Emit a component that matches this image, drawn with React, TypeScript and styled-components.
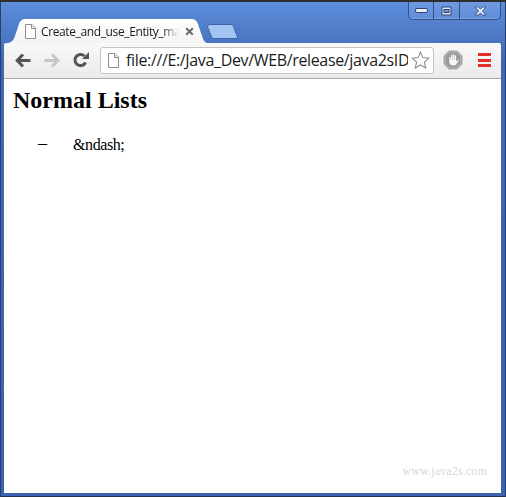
import React from 'react';
import styled, { createGlobalStyle } from 'styled-components';

const GlobalStyle = createGlobalStyle`
    html, body {
        margin: 0;
        padding: 0;
        background: #ffffff;
    }
`;

const Win = styled.div`
    width: 506px;
    height: 497px;
    box-sizing: border-box;
    display: flex;
    flex-direction: column;
    padding: 2px 5px 4px 4px;
    background: linear-gradient(180deg, #5e8fdc 0px, #4f7cc9 30px, #3f68b4 60px, #3c64b0 100%);
    box-shadow: inset 0 2px 0 #2e2e2e, inset 1px 0 0 #2b3f66, inset -1px 0 0 #2b3f66, inset 0 -1px 0 #24324f;
`;

const CaptionRow = styled.div`
    height: 17px;
    display: flex;
    justify-content: flex-end;
`;

const Controls = styled.div`
    display: flex;
    height: 18px;
    border: 1px solid #2f4f86;
    border-top: 0;
    border-radius: 0 0 5px 5px;
    box-sizing: border-box;
    box-shadow: inset 0 -1px 0 #7ea4e2;
    background: linear-gradient(180deg, #6f9ae0, #5f8cd8);
`;

const ControlBtn = styled.div<{ $w: number; $last?: boolean }>`
    width: ${(p) => p.$w}px;
    display: flex;
    align-items: center;
    justify-content: center;
    box-sizing: border-box;
    border-right: ${(p) => (p.$last ? '0' : '1px solid #2f4f86')};
`;

const TabRow = styled.div`
    height: 24px;
    display: flex;
    align-items: flex-start;
    padding-left: 4px;
`;

const Tab = styled.div`
    width: 199px;
    height: 24px;
    box-sizing: border-box;
    display: flex;
    align-items: center;
    padding: 0 13px 0 16px;
    background: linear-gradient(180deg, #ffffff, #f3f3f3);
    clip-path: path('M0 24 C5 23 6 20 8 14 L11 5 C12 2 14 0 18 0 L183 0 C187 0 189 2 190 5 L193 14 C195 20 196 23 199 24 Z');
`;

const TabTitle = styled.span`
    flex: 1;
    margin: 0 6px 0 5px;
    font: 12px "Open Sans", sans-serif;
    letter-spacing: -0.38px;
    color: #1a1a1a;
    white-space: nowrap;
    overflow: hidden;
    -webkit-mask-image: linear-gradient(90deg, #000 88%, transparent 100%);
`;

const NewTab = styled.div`
    display: flex;
    margin-top: 5px;
`;

const Toolbar = styled.div`
    height: 36px;
    box-sizing: border-box;
    display: flex;
    align-items: center;
    padding: 0 0 1px 11px;
    background: linear-gradient(180deg, #f8f8f8, #ebebeb);
    border-radius: 2px 2px 0 0;
    border-bottom: 1px solid #a8a8a8;
`;

const NavGroup = styled.div`
    display: flex;
    align-items: center;
    gap: 13px;
`;

const NavBtn = styled.div`
    width: 16px;
    display: flex;
    align-items: center;
`;

const Omnibox = styled.div`
    width: 334px;
    height: 27px;
    margin-left: 11px;
    box-sizing: border-box;
    display: flex;
    align-items: center;
    padding: 0 1px 0 6px;
    background: #ffffff;
    border: 1px solid #c4c4c4;
    border-radius: 3px;
`;

const Url = styled.span`
    width: 282px;
    margin-left: 7px;
    font: 16px "Open Sans", sans-serif;
    letter-spacing: -0.35px;
    color: #1c1c1c;
    white-space: nowrap;
    overflow: hidden;
`;

const StarBox = styled.div`
    margin-left: 3px;
    display: flex;
`;

const ExtBtn = styled.div`
    margin-left: 9px;
    display: flex;
`;

const Menu = styled.div`
    margin-left: 15px;
    width: 13px;
    display: flex;
    flex-direction: column;
    gap: 2.5px;
`;

const MenuBar = styled.div`
    height: 3px;
    background: #e0302c;
`;

const Page = styled.main`
    flex: 1;
    min-height: 0;
    display: flex;
    flex-direction: column;
    padding: 8px 14px 15px 9px;
    background: #ffffff;
    font-family: "Liberation Serif", serif;
    color: #000000;
`;

const Heading = styled.h1`
    margin: 0;
    font-size: 24px;
    line-height: 27px;
    font-weight: bold;
`;

const List = styled.ul`
    margin: 22px 0 0;
    padding: 0 0 0 25px;
    list-style: none;
`;

const Item = styled.li`
    display: flex;
    font-size: 16px;
    line-height: 18px;
`;

const Marker = styled.span`
    width: 35px;
    font-size: 18px;
    line-height: 15px;
`;

const Entity = styled.span`
    letter-spacing: -0.4px;
`;

const Watermark = styled.div`
    margin-top: auto;
    align-self: flex-end;
    font-size: 12px;
    line-height: 14px;
    letter-spacing: 0.15px;
    color: #d8d8d8;
`;

const FileIcon = ({ size }: { size: number }) => (
    <svg width={size * 0.8} height={size} viewBox="0 0 12 15">
        <path d="M1.5 .5H8L11.5 4V14.5H1.5Z" fill="#fff" stroke="#8e8e8e" />
        <path d="M7.5 .5V4.5H11.5" fill="#e8e8e8" stroke="#8e8e8e" />
    </svg>
);

const App: React.FC = () => {
    return (
        <Win>
            <GlobalStyle />
            <CaptionRow>
                <Controls>
                    <ControlBtn $w={25}>
                        <svg width="13" height="5" viewBox="0 0 13 5">
                            <rect x=".5" y=".5" width="12" height="4" rx="1.5" fill="#e8eefa" stroke="#2d466f" />
                        </svg>
                    </ControlBtn>
                    <ControlBtn $w={26}>
                        <svg width="11" height="10" viewBox="0 0 11 10">
                            <rect x=".5" y=".5" width="10" height="9" rx="1" fill="#2d466f" />
                            <rect x="1.5" y="1.5" width="8" height="7" fill="#dfe8f8" />
                            <rect x="3" y="3.5" width="5" height="3" fill="#6a93d8" stroke="#2d466f" strokeWidth="1" />
                        </svg>
                    </ControlBtn>
                    <ControlBtn $w={40} $last>
                        <svg width="13" height="10" viewBox="0 0 13 10">
                            <path d="M1 1H4.5L6.5 3.2L8.5 1H12L8.3 5L12 9H8.5L6.5 6.8L4.5 9H1L4.7 5Z" fill="#e8eefa" stroke="#2d466f" strokeWidth=".8" />
                        </svg>
                    </ControlBtn>
                </Controls>
            </CaptionRow>
            <TabRow>
                <Tab>
                    <FileIcon size={15} />
                    <TabTitle>Create_and_use_Entity_ma</TabTitle>
                    <svg width="9" height="9" viewBox="0 0 9 9">
                        <path d="M1.2 1.2L7.8 7.8M7.8 1.2L1.2 7.8" stroke="#6b6b6b" strokeWidth="2" />
                    </svg>
                </Tab>
                <NewTab>
                    <svg width="32" height="15" viewBox="0 0 32 15">
                        <path d="M.5 3C.5 1.5 1.5 .5 3 .5H24C25.5 .5 26 1.2 26.5 2.5L31 14.5H7C5.5 14.5 5 13.8 4.5 12.5Z" fill="#a3c3f0" stroke="#3f66ab" />
                    </svg>
                </NewTab>
            </TabRow>
            <Toolbar>
                <NavGroup>
                    <NavBtn>
                        <svg width="16" height="15" viewBox="0 0 16 15">
                            <path d="M8 1.5L2.2 7.5L8 13.5M3 7.5H15.5" fill="none" stroke="#555" strokeWidth="3" />
                        </svg>
                    </NavBtn>
                    <NavBtn>
                        <svg width="16" height="15" viewBox="0 0 16 15">
                            <path d="M8 1.5L13.8 7.5L8 13.5M13 7.5H.5" fill="none" stroke="#c6c6c6" strokeWidth="3" />
                        </svg>
                    </NavBtn>
                    <NavBtn>
                        <svg width="16" height="16" viewBox="0 0 16 16">
                            <path d="M12.6 10.5A5.6 5.6 0 1 1 11.5 4" fill="none" stroke="#555" strokeWidth="3" />
                            <path d="M9 7H16V0Z" fill="#555" />
                        </svg>
                    </NavBtn>
                </NavGroup>
                <Omnibox>
                    <FileIcon size={15} />
                    <Url>file:///E:/Java_Dev/WEB/release/java2sIDE</Url>
                    <StarBox>
                        <svg width="19" height="18" viewBox="0 0 19 18">
                            <path d="M9.5 1.2L11.9 6.6L17.8 7.2L13.4 11.1L14.7 16.9L9.5 13.9L4.3 16.9L5.6 11.1L1.2 7.2L7.1 6.6Z" fill="#fff" stroke="#8f8f8f" strokeWidth="1.1" />
                        </svg>
                    </StarBox>
                </Omnibox>
                <ExtBtn>
                    <svg width="20" height="20" viewBox="0 0 20 20">
                        <path d="M6 .5H14L19.5 6V14L14 19.5H6L.5 14V6Z" fill="#a4a4a4" stroke="#cdcdcd" />
                        <path d="M6 .5H14L19.5 6V14L14 19.5H6L.5 14V6Z" transform="translate(2 2) scale(.8)" fill="#9a9a9a" stroke="#b8b8b8" />
                        <path d="M6.3 7.5a.7.7 0 0 1 1.4 0V10h.4V5.5a.7.7 0 0 1 1.4 0V10h.4V5a.7.7 0 0 1 1.4 0V10h.4V6a.7.7 0 0 1 1.4 0V11.5L14.6 10.2c.8-.5 1.4.2 1 .8L13 14.6c-.6.8-1.4 1-2.5 1-2.6 0-4.2-1.2-4.2-3.6Z" fill="#f6f6f6" />
                    </svg>
                </ExtBtn>
                <Menu>
                    <MenuBar />
                    <MenuBar />
                    <MenuBar />
                </Menu>
            </Toolbar>
            <Page>
                <Heading>Normal Lists</Heading>
                <List>
                    <Item>
                        <Marker>–</Marker>
                        <Entity>&amp;ndash;</Entity>
                    </Item>
                </List>
                <Watermark>www.java2s.com</Watermark>
            </Page>
        </Win>
    );
};

export default App;
